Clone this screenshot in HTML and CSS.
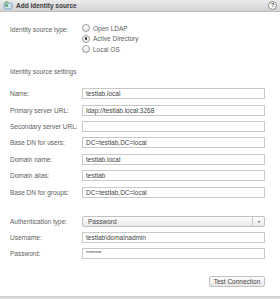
FILE: index.html
```html
<!DOCTYPE html>
<html>
<head>
<meta charset="utf-8">
<link rel="stylesheet" href="styles.css">
</head>
<body>
<div class="dialog">
  <div class="titlebar">
    <svg class="ticon" width="10" height="9" viewBox="0 0 10 9">
      <rect x="1" y="2" width="8" height="6" rx="1" fill="#cfe3ef" stroke="#6c9bb8" stroke-width="0.8"/>
      <circle cx="3.5" cy="4.5" r="1.3" fill="#4b8a3a"/>
      <path d="M1.5 2 L3.5 0.5 L5.5 2" fill="none" stroke="#4b8a3a" stroke-width="0.9"/>
    </svg>
    <span class="title">Add identity source</span>
    <span class="help">?</span>
  </div>
  <div class="content">
    <div class="typerow">
      <div class="label">Identity source type:</div>
      <div class="radios">
        <div class="radio"><span class="dot"></span>Open LDAP</div>
        <div class="radio"><span class="dot on"></span>Active Directory</div>
        <div class="radio"><span class="dot"></span>Local OS</div>
      </div>
    </div>
    <div class="section">Identity source settings</div>
    <div class="form">
      <div class="label">Name:</div><div class="input">testlab.local</div>
      <div class="label">Primary server URL:</div><div class="input">ldap://testlab.local:3268</div>
      <div class="label">Secondary server URL:</div><div class="input"></div>
      <div class="label">Base DN for users:</div><div class="input">DC=testlab,DC=local</div>
      <div class="label">Domain name:</div><div class="input">testlab.local</div>
      <div class="label">Domain alias:</div><div class="input">testlab</div>
      <div class="label">Base DN for groups:</div><div class="input">DC=testlab,DC=local</div>
    </div>
    <div class="form auth">
      <div class="label">Authentication type:</div>
      <div class="select"><span class="sval">Password</span><span class="arrow">&#9662;</span></div>
      <div class="label">Username:</div><div class="input">testlab\domainadmin</div>
      <div class="label">Password:</div><div class="input pw">********</div>
    </div>
    <div class="actions"><button class="btn">Test Connection</button></div>
  </div>
  <div class="footer"></div>
</div>
</body>
</html>
```
FILE: styles.css
```css
html, body {
  margin: 0;
  padding: 0;
  background: #ffffff;
}
body {
  font-family: "Liberation Sans", Arial, sans-serif;
  font-size: 6.5px;
  color: #606060;
}
.dialog {
  width: 280px;
  height: 299px;
  display: flex;
  flex-direction: column;
  overflow: hidden;
}
.titlebar {
  height: 12px;
  flex: none;
  display: flex;
  align-items: center;
  padding: 0 2px 0 3px;
  background: linear-gradient(#ebebeb, #d2d2d2);
  border-bottom: 1px solid #bdbdbd;
  box-sizing: border-box;
}
.ticon { flex: none; margin-right: 3px; }
.title {
  font-weight: bold;
  color: #3a3a3a;
  font-size: 6.5px;
  flex: 1;
}
.help {
  width: 7px;
  height: 7px;
  border-radius: 50%;
  border: 1px solid #8a8a8a;
  background: #fafafa;
  color: #555;
  font-size: 6px;
  font-weight: bold;
  line-height: 7px;
  text-align: center;
  margin-right: 1px;
}
.content {
  flex: 1;
  padding: 0 15px 0 10px;
}
.typerow {
  display: grid;
  grid-template-columns: 72px 1fr;
  margin-top: 12px;
}
.typerow .label { padding-top: 2px; }
.radios { display: flex; flex-direction: column; gap: 2.6px; }
.radio {
  display: flex;
  align-items: center;
  height: 8px;
}
.dot {
  width: 6px;
  height: 6px;
  border-radius: 50%;
  border: 0.8px solid #9a9a9a;
  background: linear-gradient(#fff, #e6e6e6);
  margin-right: 3px;
  position: relative;
  flex: none;
}
.dot.on::after {
  content: "";
  position: absolute;
  left: 1.7px;
  top: 1.7px;
  width: 2.6px;
  height: 2.6px;
  border-radius: 50%;
  background: #333;
}
.section { margin-top: 15px; height: 8px; line-height: 8px; }
.form {
  display: grid;
  grid-template-columns: 72px 183px;
  row-gap: 5.4px;
  align-items: center;
  margin-top: 12px;
}
.form.auth { margin-top: 18px; row-gap: 5px; }
.input {
  height: 11px;
  box-sizing: border-box;
  border: 1px solid #c9c9c9;
  background: #fff;
  padding-left: 3px;
  line-height: 9px;
  color: #444;
}
.input.pw { font-size: 5px; line-height: 8px; }
.select {
  height: 11px;
  box-sizing: border-box;
  border: 1px solid #c2c2c2;
  border-radius: 2px;
  background: linear-gradient(#fdfdfd, #e9e9e9);
  display: flex;
  align-items: center;
  color: #444;
}
.sval { flex: 1; padding-left: 5px; }
.arrow {
  width: 11px;
  height: 9px;
  border-left: 1px solid #c8c8c8;
  font-size: 4px;
  line-height: 9px;
  text-align: center;
  color: #555;
}
.actions {
  display: flex;
  justify-content: flex-end;
  margin-top: 17px;
}
.btn {
  width: 56px;
  height: 11px;
  padding: 0;
  font-family: "Liberation Sans", Arial, sans-serif;
  font-size: 6.5px;
  color: #444;
  border: 1px solid #c2c2c2;
  border-radius: 2px;
  background: linear-gradient(#fdfdfd, #e6e6e6);
}
.footer {
  height: 2px;
  flex: none;
  background: #dcdcdc;
  border-top: 1px solid #cfcfcf;
}
```
